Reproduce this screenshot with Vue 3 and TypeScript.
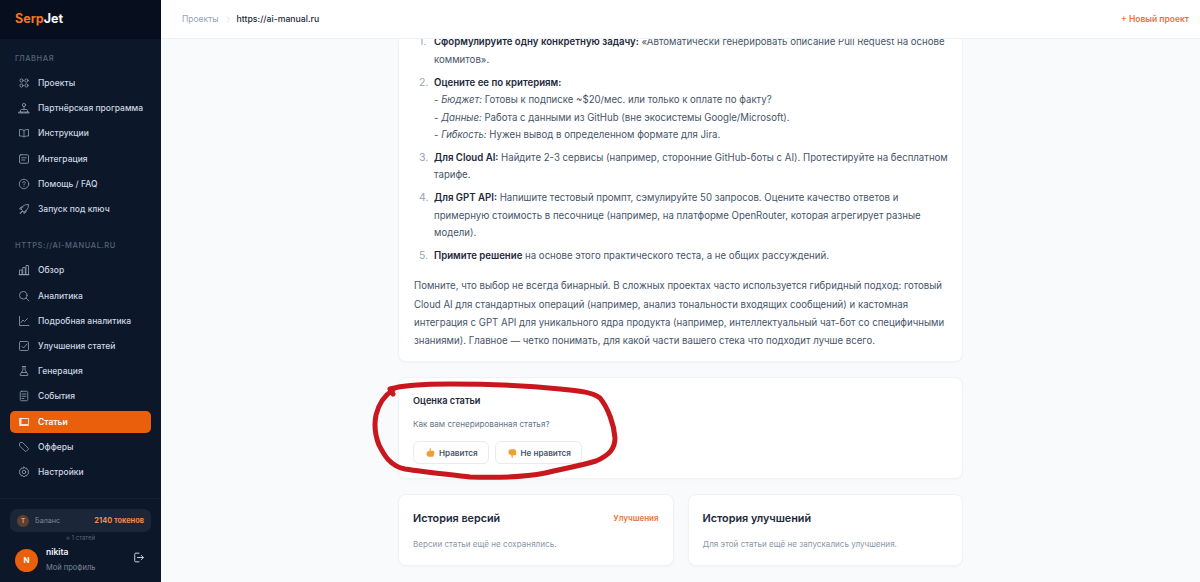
<template>
  <div class="app">
    <aside class="sidebar">
      <div class="logo"><span class="serp">Serp</span>Jet</div>
      <div class="nav-area">
        <div class="section-title">Главная</div>
        <a v-for="item in mainNav" :key="item.label" class="nav-item">
          <svg class="nav-icon" viewBox="0 0 24 24" v-html="item.icon"></svg>
          <span>{{ item.label }}</span>
        </a>
        <div class="section-title site">https://ai-manual.ru</div>
        <a v-for="item in siteNav" :key="item.label" :class="['nav-item', { active: item.label === 'Статьи' }]">
          <svg class="nav-icon" viewBox="0 0 24 24" v-html="item.icon"></svg>
          <span>{{ item.label }}</span>
        </a>
      </div>
      <div class="side-bottom">
        <div class="balance">
          <span class="token">T</span>
          <span class="balance-label">Баланс</span>
          <span class="balance-value">2140 токенов</span>
        </div>
        <div class="approx">≈ 1 статей</div>
        <div class="user">
          <div class="avatar">N</div>
          <div class="user-text">
            <div class="user-name">nikita</div>
            <div class="user-link">Мой профиль</div>
          </div>
          <svg class="logout" viewBox="0 0 24 24">
            <path d="M13 4H7a2 2 0 0 0-2 2v12a2 2 0 0 0 2 2h6" />
            <path d="M10 12h11M17 8l4 4-4 4" />
          </svg>
        </div>
      </div>
    </aside>

    <div class="main">
      <header class="topbar">
        <div class="crumbs">
          <span class="crumb-muted">Проекты</span>
          <svg class="crumb-sep" viewBox="0 0 10 10"><path d="M3 1l4 4-4 4" /></svg>
          <span class="crumb-current">https://ai-manual.ru</span>
        </div>
        <a class="new-project">+ Новый проект</a>
      </header>

      <div class="content">
        <section class="card article">
          <ol>
            <li><b>Сформулируйте одну конкретную задачу:</b> «Автоматически генерировать описание Pull Request на основе коммитов».</li>
            <li>
              <b>Оцените ее по критериям:</b><br />
              - <i>Бюджет:</i> Готовы к подписке ~$20/мес. или только к оплате по факту?<br />
              - <i>Данные:</i> Работа с данными из GitHub (вне экосистемы Google/Microsoft).<br />
              - <i>Гибкость:</i> Нужен вывод в определенном формате для Jira.
            </li>
            <li><b>Для Cloud AI:</b> Найдите 2-3 сервисы (например, сторонние GitHub-боты с AI). Протестируйте на бесплатном тарифе.</li>
            <li><b>Для GPT API:</b> Напишите тестовый промпт, сэмулируйте 50 запросов. Оцените качество ответов и примерную стоимость в песочнице (например, на платформе OpenRouter, которая агрегирует разные модели).</li>
            <li><b>Примите решение</b> на основе этого практического теста, а не общих рассуждений.</li>
          </ol>
          <p>Помните, что выбор не всегда бинарный. В сложных проектах часто используется гибридный подход: готовый Cloud AI для стандартных операций (например, анализ тональности входящих сообщений) и кастомная интеграция с GPT API для уникального ядра продукта (например, интеллектуальный чат-бот со специфичными знаниями). Главное — четко понимать, для какой части вашего стека что подходит лучше всего.</p>
        </section>

        <section class="card rating">
          <h4>Оценка статьи</h4>
          <div class="rating-q">Как вам сгенерированная статья?</div>
          <div class="rating-btns">
            <button class="rate-btn">
              <svg class="thumb" viewBox="0 0 12 12"><path d="M5.6.6c.8.2.9 1.2.7 2.2l-.2.8h3c.9 0 1.2 1 .8 1.6.5.6.4 1.4-.1 1.8.3.7.1 1.3-.4 1.6.1 1-.5 1.6-1.4 1.6H5c-1.7 0-3.4-.6-3.4-2.8 0-1.7.7-2.6 1.7-3.5C4.5 4.8 5.2 3 5 1.5c0-.5.2-1 .6-.9z" /></svg>
              Нравится
            </button>
            <button class="rate-btn">
              <svg class="thumb" viewBox="0 0 12 12"><path d="M5.6 11.4c.8-.2.9-1.2.7-2.2l-.2-.8h3c.9 0 1.2-1 .8-1.6.5-.6.4-1.4-.1-1.8.3-.7.1-1.3-.4-1.6.1-1-.5-1.6-1.4-1.6H5C3.3 1.800 1.600 2.400 1.600 4.600c0 1.700.7 2.600 1.700 3.500C4.500 7.200 5.200 9 5 10.500c0 .5.2 1 .6.9z" /></svg>
              Не нравится
            </button>
          </div>
        </section>

        <div class="history">
          <section class="card hist-card">
            <div class="hist-head">
              <h3>История версий</h3>
              <a class="hist-link">Улучшения</a>
            </div>
            <div class="hist-empty">Версии статьи ещё не сохранялись.</div>
          </section>
          <section class="card hist-card">
            <div class="hist-head">
              <h3>История улучшений</h3>
            </div>
            <div class="hist-empty">Для этой статьи ещё не запускались улучшения.</div>
          </section>
        </div>
      </div>
    </div>

    <!-- red marker drawn on top of the screenshot -->
    <svg class="scribble" viewBox="0 0 1200 582">
      <path d="M393 394 L390 389 C400 386 420 384 450 384 C490 384 530 386 560 389 C580 391 592 392 600 398 C608 408 614 424 615 438 C615 448 610 455 596 461 C580 466 565 468 545 473 C525 477 500 478 470 477 C445 474 425 472 405 469 C390 466 384 455 379 445 C375 435 374 425 376 415 C379 403 385 395 393 390" />
    </svg>
  </div>
</template>

<script setup lang="ts">
interface NavItem {
  label: string;
  icon: string;
}

const mainNav: NavItem[] = [
  { label: 'Проекты', icon: '<circle cx="7" cy="7" r="3.2"/><circle cx="17" cy="7" r="3.2"/><circle cx="7" cy="17" r="3.2"/><circle cx="17" cy="17" r="3.2"/>' },
  { label: 'Партнёрская программа', icon: '<circle cx="12" cy="6" r="3.2"/><path d="M12 9.5V14M5 20v-3a2 2 0 0 1 2-2h10a2 2 0 0 1 2 2v3M2 20h6v2H2zM9 20h6v2H9zM16 20h6v2h-6z"/>' },
  { label: 'Инструкции', icon: '<path d="M12 7c-1.5-1.5-4-2-9-2v13c5 0 7.5.5 9 2 1.5-1.5 4-2 9-2V5c-5 0-7.5.5-9 2zM12 7v13"/>' },
  { label: 'Интеграция', icon: '<rect x="3" y="3.5" width="18" height="17" rx="2.5"/><path d="M7.5 9.5h9M7.5 14h6"/>' },
  { label: 'Помощь / FAQ', icon: '<circle cx="12" cy="12" r="9.5"/><path d="M9.5 9.5a2.5 2.5 0 1 1 3.6 2.3c-.8.4-1.1 1-1.1 1.7M12 16.8v.2"/>' },
  { label: 'Запуск под ключ', icon: '<path d="M9 15l-3-3c2-5 6-9 15-9 0 9-4 13-9 15zM6 12H3l3-4h4M12 18v3l4-3v-4M8 17c-2 0-3.5 1.5-4 4 2.5-.5 4-2 4-4z"/>' },
];

const siteNav: NavItem[] = [
  { label: 'Обзор', icon: '<path d="M3 21V12h5v9zM9.5 21V7h5v14zM16 21V3h5v18zM2 21h20"/>' },
  { label: 'Аналитика', icon: '<circle cx="10.5" cy="10.5" r="7.5"/><path d="M16 16l6 6"/>' },
  { label: 'Подробная аналитика', icon: '<path d="M3 3v18h19M6 15l4-5 3 3 6-6"/>' },
  { label: 'Улучшения статей', icon: '<rect x="3" y="3" width="18" height="18" rx="2"/><path d="M8 13l3 3 7-8"/>' },
  { label: 'Генерация', icon: '<path d="M9 3h6M10 3v7L4.5 18.5A1.7 1.7 0 0 0 6 21h12a1.7 1.7 0 0 0 1.5-2.5L14 10V3M7.5 15h9"/>' },
  { label: 'События', icon: '<rect x="4.5" y="2.5" width="15" height="19" rx="2.5"/><path d="M8 8h8M8 12.5h8M8 17h4"/>' },
  { label: 'Статьи', icon: '<path d="M6 5h15v12H6zM6 5v10a2 2 0 0 1-3 1.7V8a2 2 0 0 1 3-3zM3 19h18"/>' },
  { label: 'Офферы', icon: '<path d="M3 9V4.5L4.5 3H9l11.5 11.5a1.5 1.5 0 0 1 0 2l-4 4a1.5 1.5 0 0 1-2 0z"/>' },
  { label: 'Настройки', icon: '<circle cx="12" cy="12" r="3.5"/><path d="M12 2l2 2.7 3.3-.6 1 3.2 3 1.4-1 3.3 1 3.3-3 1.4-1 3.2-3.3-.6L12 22l-2-2.7-3.3.6-1-3.2-3-1.4 1-3.3-1-3.3 3-1.4 1-3.2 3.3.6z"/>' },
];
</script>

<style>
html, body {
  margin: 0;
  height: 100%;
  overflow: hidden;
}
#app {
  height: 100%;
}
</style>

<style scoped>
.app {
  position: relative;
  display: flex;
  width: 1200px;
  height: 582px;
  overflow: hidden;
  font-family: Inter, "Noto Sans", sans-serif;
  background: #f8fafc;
}

/* sidebar */
.sidebar {
  width: 161px;
  flex-shrink: 0;
  display: flex;
  flex-direction: column;
  background: #0c1729;
  color: #cbd5e1;
}
.logo {
  height: 39px;
  box-sizing: border-box;
  padding: 10px 0 0 15px;
  background: #070e1e;
  color: #f8fafc;
  font-size: 12.5px;
  font-weight: 700;
  line-height: 18px;
}
.serp {
  color: #f97316;
}
.nav-area {
  flex: 1;
  padding: 0 10px;
}
.section-title {
  margin: 15px 0 8px 5px;
  height: 10px;
  font-size: 7.5px;
  line-height: 10px;
  letter-spacing: 0.6px;
  text-transform: uppercase;
  color: #566479;
  font-weight: 500;
}
.section-title.site {
  margin-top: 21px;
  margin-bottom: 8.5px;
}
.nav-item {
  display: flex;
  align-items: center;
  gap: 8px;
  height: 22px;
  margin-bottom: 3.2px;
  padding-left: 8px;
  border-radius: 5px;
  font-size: 8.5px;
  font-weight: 500;
  color: #cbd5e1;
}
.nav-item.active {
  background: #ea5f0c;
  color: #fff;
  font-weight: 600;
}
.nav-icon {
  width: 12px;
  height: 12px;
  flex-shrink: 0;
  fill: none;
  stroke: #94a3b8;
  stroke-width: 1.6;
  stroke-linecap: round;
  stroke-linejoin: round;
}
.active .nav-icon {
  stroke: #fff;
}
.side-bottom {
  padding: 10px 10px 0;
  height: 84px;
  box-sizing: border-box;
  border-top: 1px solid #142035;
}
.balance {
  display: flex;
  align-items: center;
  height: 23px;
  padding: 0 7px;
  background: #1b2638;
  border-radius: 7px;
}
.token {
  width: 12px;
  height: 12px;
  border-radius: 50%;
  background: #5a4030;
  color: #f59e5b;
  font-size: 6px;
  font-weight: 700;
  line-height: 12px;
  text-align: center;
}
.balance-label {
  margin-left: 6px;
  font-size: 7.2px;
  color: #7c8798;
}
.balance-value {
  margin-left: auto;
  font-size: 7.4px;
  font-weight: 700;
  color: #f5894a;
}
.approx {
  margin-top: 1px;
  text-align: center;
  font-size: 6px;
  line-height: 9px;
  color: #5b6778;
}
.user {
  display: flex;
  align-items: center;
  margin: 4px 0 0 5px;
}
.avatar {
  width: 23px;
  height: 23px;
  margin-top: 1px;
  border-radius: 50%;
  background: #ea5f0c;
  color: #fff;
  font-size: 8px;
  font-weight: 700;
  line-height: 23px;
  text-align: center;
}
.user-text {
  margin-left: 8px;
  flex: 1;
}
.user-name {
  font-size: 8.5px;
  font-weight: 600;
  line-height: 13px;
  color: #f1f5f9;
}
.user-link {
  margin-top: 3px;
  font-size: 7.5px;
  line-height: 11px;
  color: #7c8798;
}
.logout {
  width: 13px;
  height: 13px;
  margin: 0 6px 4px 0;
  fill: none;
  stroke: #cbd5e1;
  stroke-width: 1.8;
  stroke-linecap: round;
  stroke-linejoin: round;
}

/* main column */
.main {
  flex: 1;
  min-width: 0;
  display: flex;
  flex-direction: column;
}
.topbar {
  height: 39px;
  box-sizing: border-box;
  flex-shrink: 0;
  display: flex;
  align-items: center;
  justify-content: space-between;
  padding: 0 11px 0 21px;
  background: #fff;
  border-bottom: 1px solid #eef1f5;
  font-size: 8.5px;
  position: relative;
  z-index: 1;
}
.crumbs {
  display: flex;
  align-items: center;
}
.crumb-muted {
  color: #94a3b8;
}
.crumb-sep {
  width: 7px;
  height: 7px;
  margin: 0 5px 0 6px;
  fill: none;
  stroke: #cbd5e1;
  stroke-width: 1;
}
.crumb-current {
  color: #1e293b;
  font-size: 8.7px;
  font-weight: 500;
}
.new-project {
  color: #e8743a;
  font-weight: 600;
}
.content {
  flex: 1;
  min-height: 0;
  overflow: hidden;
  display: flex;
  flex-direction: column;
  justify-content: flex-end;
  gap: 15px;
  padding: 0 237px 16px;
}
.card {
  flex-shrink: 0;
  background: #fff;
  border: 1px solid #f0f2f6;
  border-radius: 8px;
  box-shadow: 0 1px 2px rgba(15, 23, 42, 0.03);
}
.article {
  padding: 0 12px 10.5px 15px;
  font-size: 9.65px;
  line-height: 17.4px;
  color: #475569;
}
.article b {
  color: #1e293b;
  font-weight: 600;
}
.article ol {
  margin: 0;
  padding: 0 0 0 20px;
  list-style: none;
  counter-reset: step;
}
.article li {
  margin-bottom: 5.5px;
  counter-increment: step;
}
.article li::before {
  content: counter(step) ".";
  display: inline-block;
  width: 15px;
  margin-left: -20px;
  padding-left: 5px;
  color: #94a3b8;
  font-size: 10.5px;
}
.article p {
  margin: 13px 0 0;
  line-height: 18.3px;
}
.rating {
  padding: 16px 14px 0;
  height: 102px;
  box-sizing: border-box;
}
.rating h4 {
  margin: 0;
  font-size: 9.2px;
  line-height: 14px;
  font-weight: 600;
  color: #1e293b;
}
.rating-q {
  margin-top: 10px;
  font-size: 8.15px;
  line-height: 12px;
  color: #64748b;
}
.rating-btns {
  display: flex;
  gap: 6px;
  margin-top: 11px;
}
.rate-btn {
  display: flex;
  align-items: center;
  gap: 3px;
  height: 23px;
  padding: 0 10px 0 11px;
  background: #fff;
  border: 1px solid #e8ecf1;
  border-radius: 6px;
  font-family: inherit;
  font-size: 8.1px;
  font-weight: 600;
  color: #475569;
}
.thumb {
  width: 11px;
  height: 12px;
  fill: #f0a030;
}
.history {
  display: grid;
  grid-template-columns: 1fr 1fr;
  gap: 14px;
  flex-shrink: 0;
}
.hist-card {
  height: 72px;
  box-sizing: border-box;
  padding: 14px 14px;
}
.hist-head {
  display: flex;
  align-items: center;
  justify-content: space-between;
  height: 18px;
}
.hist-head h3 {
  margin: 0;
  font-size: 10.8px;
  font-weight: 600;
  color: #1e293b;
}
.hist-link {
  font-size: 8px;
  font-weight: 600;
  color: #e8743a;
}
.hist-empty {
  margin-top: 11px;
  font-size: 8.1px;
  line-height: 12px;
  color: #8b97a8;
}
.scribble {
  position: absolute;
  inset: 0;
  width: 1200px;
  height: 582px;
  pointer-events: none;
  fill: none;
  stroke: #c8171d;
  stroke-width: 5;
  stroke-linecap: round;
  stroke-linejoin: round;
}
</style>
